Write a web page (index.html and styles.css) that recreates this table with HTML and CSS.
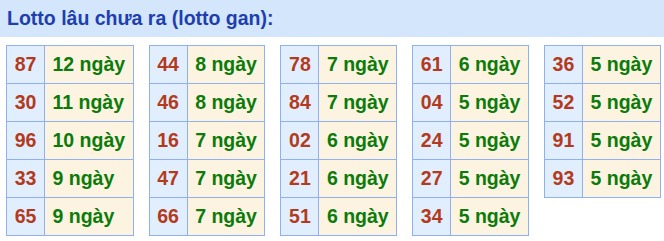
FILE: index.html
```html
<!DOCTYPE html>
<html lang="vi">
<head>
<meta charset="utf-8">
<title>Lotto gan</title>
<link rel="stylesheet" href="styles.css">
</head>
<body>
<div class="header">Lotto lâu chưa ra (lotto gan):</div>
<div class="tables">
  <table>
    <tr><td class="num">87</td><td class="day">12 ngày</td></tr>
    <tr><td class="num">30</td><td class="day">11 ngày</td></tr>
    <tr><td class="num">96</td><td class="day">10 ngày</td></tr>
    <tr><td class="num">33</td><td class="day">9 ngày</td></tr>
    <tr><td class="num">65</td><td class="day">9 ngày</td></tr>
  </table>
  <table>
    <tr><td class="num">44</td><td class="day">8 ngày</td></tr>
    <tr><td class="num">46</td><td class="day">8 ngày</td></tr>
    <tr><td class="num">16</td><td class="day">7 ngày</td></tr>
    <tr><td class="num">47</td><td class="day">7 ngày</td></tr>
    <tr><td class="num">66</td><td class="day">7 ngày</td></tr>
  </table>
  <table>
    <tr><td class="num">78</td><td class="day">7 ngày</td></tr>
    <tr><td class="num">84</td><td class="day">7 ngày</td></tr>
    <tr><td class="num">02</td><td class="day">6 ngày</td></tr>
    <tr><td class="num">21</td><td class="day">6 ngày</td></tr>
    <tr><td class="num">51</td><td class="day">6 ngày</td></tr>
  </table>
  <table>
    <tr><td class="num">61</td><td class="day">6 ngày</td></tr>
    <tr><td class="num">04</td><td class="day">5 ngày</td></tr>
    <tr><td class="num">24</td><td class="day">5 ngày</td></tr>
    <tr><td class="num">27</td><td class="day">5 ngày</td></tr>
    <tr><td class="num">34</td><td class="day">5 ngày</td></tr>
  </table>
  <table>
    <tr><td class="num">36</td><td class="day">5 ngày</td></tr>
    <tr><td class="num">52</td><td class="day">5 ngày</td></tr>
    <tr><td class="num">91</td><td class="day">5 ngày</td></tr>
    <tr><td class="num">93</td><td class="day">5 ngày</td></tr>
  </table>
</div>
</body>
</html>
```
FILE: styles.css
```css
html, body {
  margin: 0;
  padding: 0;
  background: #ffffff;
  font-family: "Liberation Sans", Arial, sans-serif;
}

.header {
  height: 37px;
  display: flex;
  align-items: center;
  padding-left: 7px;
  background: #d4e6fb;
  color: #1d3fb0;
  font-size: 19.5px;
  font-weight: bold;
}

.tables {
  display: flex;
  align-items: flex-start;
  gap: 15px;
  padding: 8px 0 0 6px;
}

table {
  border-collapse: collapse;
  flex: none;
}

td {
  border: 1px solid #8fb1f1;
  height: 37px;
  padding: 0;
  font-size: 19.5px;
  font-weight: bold;
  white-space: nowrap;
}

.num {
  width: 37px;
  text-align: center;
  background: #e1eefd;
  color: #b33a1c;
}

.day {
  padding: 0 7.5px;
  background: #fdf3e1;
  color: #0b7b0b;
}
```
